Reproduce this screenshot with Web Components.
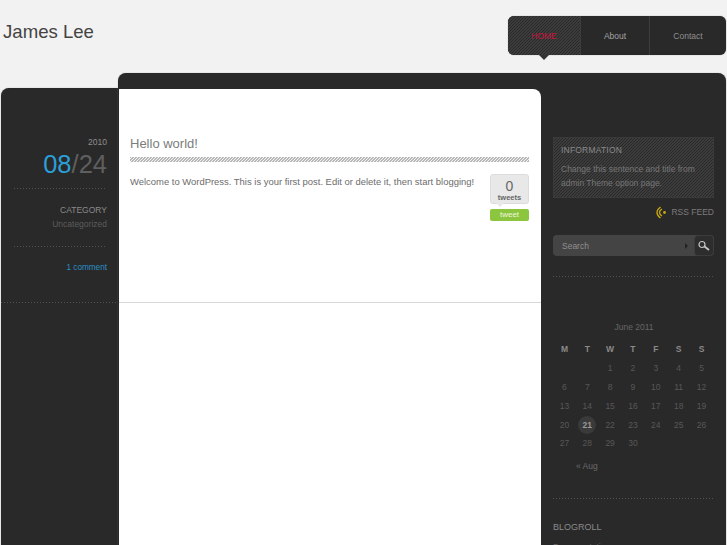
<!DOCTYPE html>
<html>
<head>
<meta charset="utf-8">
<title>James Lee</title>
<style>
  html, body { margin: 0; height: 545px; overflow: hidden; }
  body { background: #f2f2f2; font-family: "Liberation Sans", Arial, sans-serif; }
  .shell { display: grid; grid-template-columns: 118px 609px; height: 472px; }
</style>
</head>
<body>
<site-header>
  <main-nav></main-nav>
</site-header>
<div class="shell">
  <date-panel></date-panel>
  <content-panel>
    <post-card slot="main"></post-card>
    <side-bar slot="side">
      <info-box></info-box>
      <rss-link></rss-link>
      <search-box></search-box>
      <cal-widget></cal-widget>
      <blog-roll></blog-roll>
    </side-bar>
  </content-panel>
</div>

<script>
const dots = "repeating-linear-gradient(90deg, #525252 0 1px, transparent 1px 3px)";
const hatch = "repeating-linear-gradient(135deg, #3c3c3c 0 .75px, #292929 .75px 2.1213px)";

class SiteHeader extends HTMLElement {
  constructor() {
    super();
    this.attachShadow({ mode: "open" }).innerHTML = `
      <style>
      :host { display: flex; justify-content: space-between; height: 73px; box-sizing: border-box; padding: 16px 1px 0 3px; }
      h1 { margin: 4px 0 0; font-size: 18.6px; line-height: 24px; font-weight: normal; color: #444; }
      </style>
      <h1>James Lee</h1>
      <slot></slot>`;
  }
}

class MainNav extends HTMLElement {
  constructor() {
    super();
    this.attachShadow({ mode: "open" }).innerHTML = `
      <style>
      :host { display: block; position: relative; height: 39px; }
      ul { display: grid; grid-template-columns: 72px 69px 77px; width: 218px; height: 39px; margin: 0; padding: 0; list-style: none;
        background: #292929; border-radius: 6px; box-shadow: 0 0 1px #777; overflow: hidden; }
      li { display: flex; align-items: center; justify-content: center; padding-top: 1px; font-size: 8.5px; color: #a5a5a5; border-left: 1px solid #3d3d3d; }
      li:first-child { border-left: 0; color: #c8143c; background: ${hatch}; }
      li:last-child { color: #8e8e8e; }
      .arrow { position: absolute; left: 31px; top: 39px; width: 0; height: 0; border: 5px solid transparent; border-top-color: #333; border-bottom: 0; }
      </style>
      <ul><li>HOME</li><li>About</li><li>Contact</li></ul>
      <div class="arrow"></div>`;
  }
}

class DatePanel extends HTMLElement {
  constructor() {
    super();
    this.attachShadow({ mode: "open" }).innerHTML = `
      <style>
      :host { display: block; margin: 15px 0 0 1px; background: #292929; border-radius: 8px 0 0 0; box-shadow: 0 0 1px #888; text-align: right; color: #8a8a8a; font-size: 8.5px; }
      .post { height: 215px; box-sizing: border-box; padding: 49px 11px 0 13px; background: ${dots} left bottom / 100% 1px no-repeat; }
      .year { line-height: 11px; color: #8d8d8d; }
      .date { font-size: 25.5px; line-height: 28px; margin-top: 2px; color: #5f5f5f; }
      .date b { font-weight: normal; color: #2a9fd8; }
      .block { background: ${dots} left top / 100% 1px no-repeat; }
      .cat { margin-top: 10px; padding-top: 15px; height: 43px; line-height: 14px; color: #8a8a8a; }
      .cat span { display: block; color: #5c5c5c; }
      .comment { padding-top: 15px; line-height: 14px; font-size: 8.2px; color: #2a8fc4; }
      </style>
      <div class="post">
        <div class="year">2010</div>
        <div class="date"><b>08</b>/24</div>
        <div class="block cat">CATEGORY<span>Uncategorized</span></div>
        <div class="block comment">1 comment</div>
      </div>`;
  }
}

class ContentPanel extends HTMLElement {
  constructor() {
    super();
    this.attachShadow({ mode: "open" }).innerHTML = `
      <style>
      :host { display: grid; grid-template-columns: 422px 185px; width: 608px; padding: 16px 0 0 1px; box-sizing: border-box; background: #292929; border-radius: 8px 8px 0 0; box-shadow: 0 0 1px #888; }
      .main { background: #fff; border-radius: 0 8px 0 0; }
      </style>
      <div class="main"><slot name="main"></slot></div>
      <slot name="side"></slot>`;
  }
}

class PostCard extends HTMLElement {
  constructor() {
    super();
    this.attachShadow({ mode: "open" }).innerHTML = `
      <style>
      :host { display: block; height: 214px; box-sizing: border-box; padding: 47px 12px 0 11px; border-bottom: 1px solid #d8d8d8; color: #6c6c6c; }
      h2 { margin: 0; font-size: 13px; line-height: 16px; font-weight: normal; color: #7c7c7c; }
      .rule { height: 5px; margin: 5px 0 11px; background: repeating-linear-gradient(135deg, #b8b8b8 0 .9px, #f4f4f4 .9px 2.1213px); }
      .body { display: flex; justify-content: space-between; align-items: flex-start; }
      p { margin: 0; font-size: 9.45px; line-height: 13px; padding-top: 2px; }
      </style>
      <h2>Hello world!</h2>
      <div class="rule"></div>
      <div class="body">
        <p>Welcome to WordPress. This is your first post. Edit or delete it, then start blogging!</p>
        <tweet-badge></tweet-badge>
      </div>`;
  }
}

class TweetBadge extends HTMLElement {
  constructor() {
    super();
    this.attachShadow({ mode: "open" }).innerHTML = `
      <style>
      :host { display: block; width: 39px; flex: none; margin-top: 1px; text-align: center; }
      .count { position: relative; height: 30px; box-sizing: border-box; padding-top: 4px; background: #e8e8e8; border: 1px solid #dcdcdc; border-radius: 3px; color: #555; }
      .count::after { content: ""; position: absolute; left: 5px; bottom: -4px; border: 4px solid transparent; border-top-color: #e8e8e8; border-bottom: 0; }
      .n { font-size: 14px; line-height: 14px; font-weight: normal; color: #666; }
      .l { font-size: 7.5px; line-height: 9px; font-weight: bold; color: #666; }
      .btn { margin-top: 5px; height: 12px; line-height: 12px; background: #8cc63f; border-radius: 2px; color: #eef6dc; font-size: 8px; }
      </style>
      <div class="count"><div class="n">0</div><div class="l">tweets</div></div>
      <div class="btn">tweet</div>`;
  }
}

class SideBar extends HTMLElement {
  constructor() {
    super();
    this.attachShadow({ mode: "open" }).innerHTML = `
      <style>
      :host { display: block; padding: 48px 12px 0 12px; overflow: hidden; }
      </style>
      <slot></slot>`;
  }
}

class InfoBox extends HTMLElement {
  constructor() {
    super();
    this.attachShadow({ mode: "open" }).innerHTML = `
      <style>
      :host { display: block; height: 61px; box-sizing: border-box; padding: 8px; background: ${hatch}; box-shadow: inset 0 0 0 1px #3a3a3a; color: #777; font-size: 8.5px; }
      h3 { margin: 0 0 6px; font-size: 8.5px; line-height: 11px; font-weight: normal; color: #8a8a8a; letter-spacing: .2px; }
      p { margin: 0; line-height: 14px; }
      </style>
      <h3>INFORMATION</h3>
      <p>Change this sentence and title from admin Theme option page.</p>`;
  }
}

class RssLink extends HTMLElement {
  constructor() {
    super();
    this.attachShadow({ mode: "open" }).innerHTML = `
      <style>
      :host { display: flex; justify-content: flex-end; align-items: center; gap: 4px; height: 12px; margin-top: 8px; font-size: 8.5px; color: #7c7c7c; }
      svg { display: block; }
      </style>
      <svg width="11" height="13" viewBox="0 0 11 13" fill="none" stroke="#c9a810" stroke-width="1.3">
        <path d="M4.5 1 Q1 3.5 1 6.5 Q1 9.5 4.5 12"/>
        <path d="M6 3 Q3.5 4.5 3.5 6.5 Q3.5 8.5 6 10"/>
        <circle cx="8.5" cy="6.5" r="1.4" fill="#c9a810" stroke="none"/>
      </svg>
      <span>RSS FEED</span>`;
  }
}

class SearchBox extends HTMLElement {
  constructor() {
    super();
    this.attachShadow({ mode: "open" }).innerHTML = `
      <style>
      :host { display: block; margin-top: 17px; height: 21px; }
      .bar { display: flex; height: 21px; align-items: center; background: #444; border-radius: 4px; }
      .txt { flex: 1; padding-left: 9px; font-size: 8.5px; color: #8f8f8f; }
      .tri { width: 0; height: 0; border: 3px solid transparent; border-left-color: #222; border-right: 0; margin-right: 6px; }
      .go { width: 20px; height: 21px; box-sizing: border-box; background: #2d2d2d; border: 1px solid #3c3c3c; border-radius: 4px; display: flex; align-items: center; justify-content: center; }
      </style>
      <div class="bar">
        <span class="txt">Search</span>
        <span class="tri"></span>
        <span class="go">
          <svg width="14" height="12" viewBox="0 0 14 12" fill="none" stroke="#c4c4c4">
            <circle cx="5" cy="4.5" r="3" stroke-width="1.2"/>
            <path d="M7.5 6.5 L12 10" stroke-width="1.8"/>
          </svg>
        </span>
      </div>`;
  }
}

class CalWidget extends HTMLElement {
  constructor() {
    super();
    const rows = [
      ["", "", 1, 2, 3, 4, 5],
      [6, 7, 8, 9, 10, 11, 12],
      [13, 14, 15, 16, 17, 18, 19],
      [20, 21, 22, 23, 24, 25, 26],
      [27, 28, 29, 30, "", "", ""],
    ];
    const body = rows.map((r) => "<tr>" + r.map((d) =>
      d === 21 ? `<td><span class="today">21</span></td>` : `<td>${d}</td>`
    ).join("") + "</tr>").join("");
    this.attachShadow({ mode: "open" }).innerHTML = `
      <style>
      :host { display: block; margin-top: 20px; padding-top: 46px; background: ${dots} left top / 100% 1px no-repeat; font-size: 8.5px; color: #585858; }
      .cap { text-align: center; line-height: 11px; color: #666; margin-left: 1px; }
      table { border-collapse: collapse; table-layout: fixed; width: 160px; margin: 7px 0 0 0; }
      th, td { padding: 0; height: 18.8px; text-align: center; font-weight: normal; }
      th { font-weight: bold; color: #8a8a8a; }
      .today { display: inline-block; width: 18px; height: 18px; line-height: 18px; border-radius: 50%; background: #3a3a3a; color: #999; font-weight: bold; }
      .prev { margin: 7px 0 0 23px; line-height: 12px; color: #6a6a6a; }
      </style>
      <div class="cap">June 2011</div>
      <table>
        <thead><tr><th>M</th><th>T</th><th>W</th><th>T</th><th>F</th><th>S</th><th>S</th></tr></thead>
        <tbody>${body}</tbody>
      </table>
      <div class="prev">« Aug</div>`;
  }
}

class BlogRoll extends HTMLElement {
  constructor() {
    super();
    this.attachShadow({ mode: "open" }).innerHTML = `
      <style>
      :host { display: block; margin-top: 26px; padding-top: 23px; background: ${dots} left top / 100% 1px no-repeat; font-size: 8.5px; color: #666; }
      h3 { margin: 0; font-size: 9px; line-height: 12px; font-weight: normal; color: #8a8a8a; }
      div { margin-top: 8px; line-height: 12px; }
      </style>
      <h3>BLOGROLL</h3>
      <div>Documentation</div>`;
  }
}

customElements.define("site-header", SiteHeader);
customElements.define("main-nav", MainNav);
customElements.define("date-panel", DatePanel);
customElements.define("content-panel", ContentPanel);
customElements.define("post-card", PostCard);
customElements.define("tweet-badge", TweetBadge);
customElements.define("side-bar", SideBar);
customElements.define("info-box", InfoBox);
customElements.define("rss-link", RssLink);
customElements.define("search-box", SearchBox);
customElements.define("cal-widget", CalWidget);
customElements.define("blog-roll", BlogRoll);
</script>
</body>
</html>
